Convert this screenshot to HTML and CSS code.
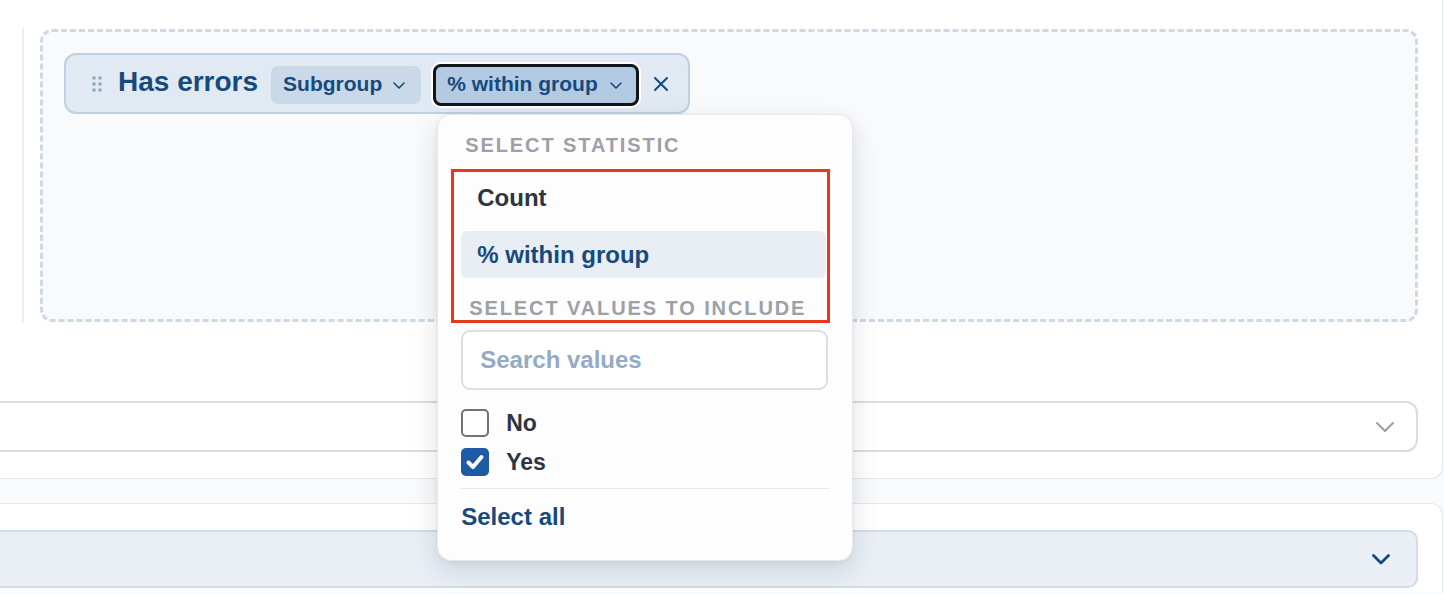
FILE: index.html
```html
<!DOCTYPE html>
<html lang="en">
<head>
<meta charset="utf-8">
<title>Table builder</title>
<link rel="stylesheet" href="styles.css">
</head>
<body>
<div class="page">
  <div class="card card-top">
    <div class="section">
      <div class="dropzone">
        <div class="chip">
          <svg class="handle" width="10" height="16" viewBox="0 0 10 16" aria-hidden="true">
            <circle cx="2" cy="2" r="1.8"/><circle cx="8" cy="2" r="1.8"/>
            <circle cx="2" cy="8" r="1.8"/><circle cx="8" cy="8" r="1.8"/>
            <circle cx="2" cy="14" r="1.8"/><circle cx="8" cy="14" r="1.8"/>
          </svg>
          <span class="chip-title">Has errors</span>
          <button class="pill pill-sub">Subgroup
            <svg class="pill-chev" width="12" height="7" viewBox="0 0 12 7"><path d="M1 1 L6 6 L11 1"/></svg>
          </button>
          <span class="anchor">
            <button class="pill pill-stat">% within group
              <svg class="pill-chev" width="12" height="7" viewBox="0 0 12 7"><path d="M1 1 L6 6 L11 1"/></svg>
            </button>
            <div class="menu">
              <div class="menu-label label-stat">SELECT STATISTIC</div>
              <div class="option option-first">Count</div>
              <div class="option option-active">% within group</div>
              <div class="menu-label label-values">SELECT VALUES TO INCLUDE</div>
              <input class="search" type="text" placeholder="Search values">
              <label class="check-row"><span class="box"></span>No</label>
              <label class="check-row row-yes"><span class="box box-on">
                <svg width="28" height="28" viewBox="0 0 28 28"><path d="M7.5 14.5 L12 19 L20.5 9"/></svg>
              </span>Yes</label>
              <div class="divider"></div>
              <a class="select-all">Select all</a>
              <div class="annotation"></div>
            </div>
          </span>
          <button class="close" aria-label="Remove">
            <svg width="14" height="14" viewBox="0 0 14 14"><path d="M1 1 L13 13 M13 1 L1 13"/></svg>
          </button>
        </div>
      </div>
    </div>
    <div class="select select-plain">
      <svg class="sel-chev" width="18" height="10" viewBox="0 0 18 10"><path d="M1 1 L9 9 L17 1"/></svg>
    </div>
  </div>
  <div class="card card-bottom">
    <div class="select select-tint">
      <svg class="sel-chev" width="18" height="11" viewBox="0 0 18 11"><path d="M1.5 1.5 L9 9 L16.5 1.5"/></svg>
    </div>
  </div>
</div>
</body>
</html>
```

FILE: styles.css
```css
html, body {
  margin: 0;
  padding: 0;
  overflow: hidden;
  height: 594px;
}
body {
  background: #f8fafc;
  font-family: "Liberation Sans", Arial, sans-serif;
  color: #2e3440;
}
.page {
  margin-left: -40px;
  width: 1483px;
}
.card {
  background: #ffffff;
  border: 1px solid #e4e7eb;
  box-sizing: border-box;
}
.card-top {
  border-top: 0;
  border-radius: 0 0 12px 12px;
  padding: 28px 24px 26px 20px;
}
.card-bottom {
  margin-top: 24px;
  border-bottom: 0;
  border-radius: 12px 12px 0 0;
  padding: 26px 24px 4px 20px;
}
.section {
  margin-left: 41px;
  border-left: 2px solid #eceef1;
  padding: 1px 0 1px 16px;
}
.dropzone {
  box-sizing: border-box;
  height: 293px;
  border: 3px dashed #cfd9e4;
  border-radius: 12px;
  background: #f8fafc;
  padding: 21px;
}
.chip {
  display: inline-flex;
  align-items: center;
  box-sizing: border-box;
  height: 61px;
  padding: 3px 20px 0 26px;
  background: #e1e9f2;
  border: 2px solid #bfd0e2;
  border-radius: 12px;
}
.handle {
  fill: #8ea8c4;
  flex: none;
  margin-top: -3px;
}
.chip-title {
  margin-left: 16px;
  font-size: 28px;
  font-weight: 700;
  color: #174a7c;
  padding-bottom: 7px;
}
button {
  font-family: inherit;
  cursor: pointer;
}
.pill {
  display: inline-flex;
  align-items: center;
  box-sizing: border-box;
  font-size: 21px;
  font-weight: 700;
  color: #174a7c;
  border: 0;
  border-radius: 7px;
  padding: 0 16px 3px 12px;
  gap: 11px;
}
.pill-chev {
  fill: none;
  stroke: #174a7c;
  stroke-width: 1.6;
  stroke-linecap: round;
  stroke-linejoin: round;
  margin-top: 4px;
}
.pill-sub {
  margin-left: 13px;
  height: 38px;
  background: #c9d9ea;
}
.anchor {
  position: relative;
  margin-left: 12px;
  display: inline-flex;
}
.pill-stat {
  height: 42px;
  background: #b3cbe2;
  border: 3px solid #111418;
  border-radius: 8px;
  padding: 0 14px 3px 11px;
  gap: 12px;
  box-shadow: 0 0 0 2px #ffffff;
}
.close {
  margin-left: 15px;
  background: none;
  border: 0;
  padding: 0;
  display: inline-flex;
  margin-top: -2px;
}
.close svg {
  stroke: #174a7c;
  stroke-width: 2;
  stroke-linecap: round;
}

/* dropdown menu */
.menu {
  position: absolute;
  top: calc(100% + 8px);
  left: 4px;
  z-index: 10;
  width: 416px;
  box-sizing: border-box;
  background: #fdfdfe;
  border: 1px solid #e6e8ec;
  border-radius: 14px;
  padding: 19px 23px 31px;
  box-shadow: 0 10px 28px rgba(15, 23, 42, 0.12), 0 2px 6px rgba(15, 23, 42, 0.05);
  display: flex;
  flex-direction: column;
}
.menu-label {
  height: 22px;
  line-height: 22px;
  font-size: 20px;
  font-weight: 700;
  letter-spacing: 1.9px;
  color: #9ca0a8;
  white-space: nowrap;
}
.label-stat {
  padding-left: 4px;
}
.label-values {
  padding-left: 8px;
  margin-top: 19px;
}
.option {
  display: flex;
  align-items: center;
  height: 47px;
  margin-right: 3px;
  padding: 0 16px;
  border-radius: 6px;
  font-size: 24px;
  font-weight: 700;
  color: #2e3440;
  box-sizing: border-box;
}
.option-first {
  margin-top: 18px;
}
.option-active {
  margin-top: 10px;
  background: #e8eef4;
  color: #174a7c;
}
.search {
  margin-top: 11px;
  height: 60px;
  width: 367px;
  box-sizing: border-box;
  border: 2px solid #dcdfe3;
  border-radius: 9px;
  padding: 0 17px;
  font-family: inherit;
  font-size: 24px;
  font-weight: 700;
  background: #ffffff;
  outline: none;
}
.search::placeholder {
  color: #94abc5;
  opacity: 1;
}
.check-row {
  display: flex;
  align-items: center;
  gap: 17px;
  height: 28px;
  margin-top: 19px;
  font-size: 23px;
  font-weight: 700;
  color: #2e3440;
}
.row-yes {
  margin-top: 11px;
}
.box {
  width: 28px;
  height: 28px;
  box-sizing: border-box;
  border: 2px solid #6e7279;
  border-radius: 5px;
  background: #ffffff;
  flex: none;
  display: flex;
}
.box-on {
  border: 0;
  background: #1d5ba4;
}
.box-on svg {
  fill: none;
  stroke: #ffffff;
  stroke-width: 4;
  stroke-linecap: round;
  stroke-linejoin: round;
}
.divider {
  margin-top: 12px;
  height: 1px;
  background: #e5e7eb;
}
.select-all {
  margin-top: 16px;
  height: 24px;
  line-height: 24px;
  font-size: 24px;
  font-weight: 700;
  color: #174a7c;
  cursor: pointer;
}
.annotation {
  position: absolute;
  left: 13px;
  top: 54px;
  width: 379px;
  height: 154px;
  box-sizing: border-box;
  border: 3px solid #e8391d;
  pointer-events: none;
}

/* selects */
.select {
  display: flex;
  align-items: center;
  justify-content: flex-end;
  box-sizing: border-box;
}
.select-plain {
  margin-top: 78px;
  height: 51px;
  background: #ffffff;
  border: 2px solid #d9dce1;
  border-radius: 12px;
  padding-right: 22px;
}
.select-plain .sel-chev {
  fill: none;
  stroke: #9a9ea5;
  stroke-width: 2;
  stroke-linecap: round;
  stroke-linejoin: round;
}
.select-tint {
  height: 58px;
  background: #e9eff5;
  border: 2px solid #d2dce8;
  border-radius: 10px;
  padding-right: 26px;
}
.select-tint .sel-chev {
  fill: none;
  stroke: #174a7c;
  stroke-width: 2.8;
  stroke-linecap: round;
  stroke-linejoin: round;
}
```
